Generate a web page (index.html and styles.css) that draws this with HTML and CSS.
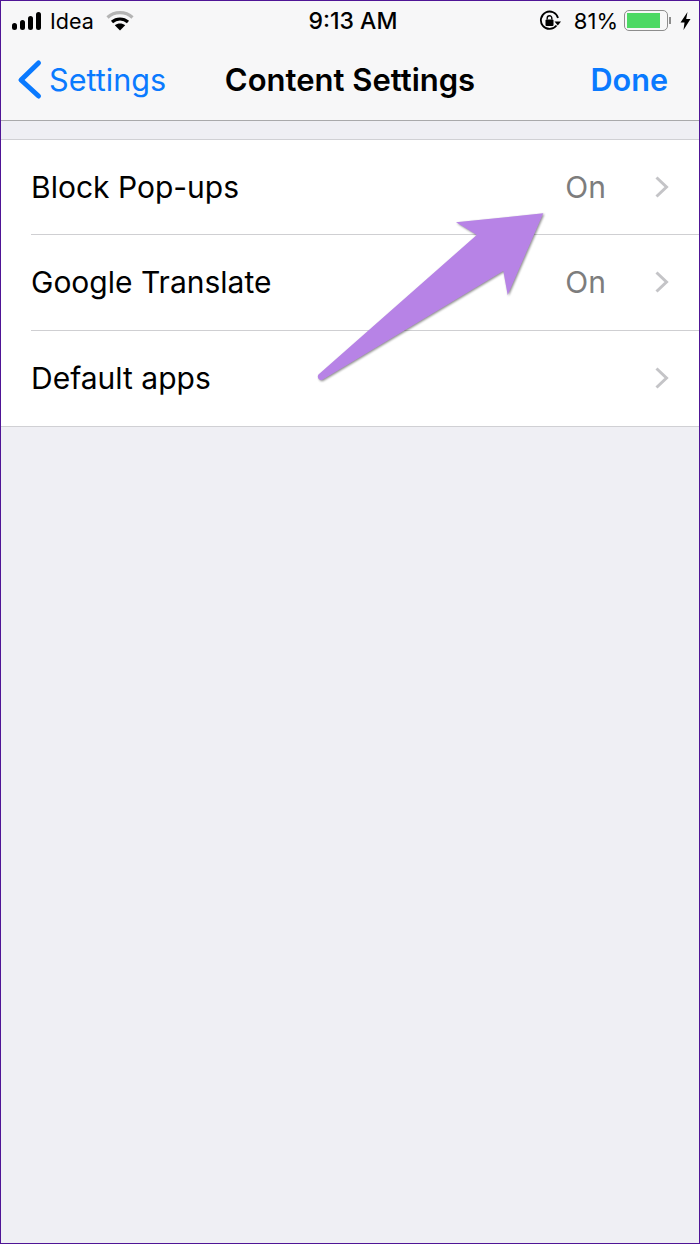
FILE: index.html
```html
<!DOCTYPE html>
<html lang="en">
<head>
    <meta charset="UTF-8">
    <meta name="viewport" content="width=device-width, initial-scale=1.0">
    <title>Content Settings</title>
    <link rel="stylesheet" href="styles.css">
</head>
<body>

<div class="phone">
    <header class="top-bar">
        <div class="status-bar">
            <div class="status-left">
                <svg class="signal" width="32" height="20" viewBox="0 0 32 20">
                    <rect x="0" y="12" width="5" height="7" rx="2.5"/>
                    <rect x="8" y="9" width="5" height="10" rx="2.5"/>
                    <rect x="16" y="5" width="5" height="14" rx="2.5"/>
                    <rect x="24" y="1" width="5" height="18" rx="2.5"/>
                </svg>
                <span class="carrier">Idea</span>
                <svg class="wifi" width="28" height="20" viewBox="0 0 28 20">
                    <path d="M1.500 6.500C8.500 0 19.500 0 26.500 6.500" fill="none" stroke="#b4b4b4" stroke-width="3.200"/>
                    <path d="M6 11C10.500 7 17.500 7 22 11" fill="none" stroke="#000" stroke-width="3.200"/>
                    <path d="M14 19.500L8.800 14.200C11.800 11.800 16.200 11.800 19.200 14.200Z"/>
                </svg>
            </div>
            <div class="status-time">9:13 AM</div>
            <div class="status-right">
                <svg class="rotation-lock" width="22" height="22" viewBox="0 0 22 22">
                    <path d="M17.500 15.500A8.700 8.700 0 1 1 19 8" fill="none" stroke="#000" stroke-width="1.800"/>
                    <path d="M15.500 11.500h6.500l-3.200 4z"/>
                    <rect x="6.500" y="9.500" width="8" height="6.500" rx="1"/>
                    <path d="M8.200 9.500V8a2.300 2.300 0 0 1 4.600 0v1.500" fill="none" stroke="#000" stroke-width="1.400"/>
                </svg>
                <span class="battery-pct">81%</span>
                <div class="battery">
                    <div class="battery-body"><div class="battery-fill"></div></div>
                    <div class="battery-cap"></div>
                </div>
                <svg class="bolt" width="11" height="20" viewBox="0 0 11 20">
                    <path d="M7.500 1L0.500 11.500H4.500L3.500 19L10.500 8H6.200Z"/>
                </svg>
            </div>
        </div>
        <nav class="nav-bar">
            <a class="nav-back">
                <svg class="back-chevron" width="26" height="42" viewBox="0 0 26 42">
                    <path d="M21.500 4L4 21L21.500 37" fill="none" stroke="#0a7aff" stroke-width="5" stroke-linecap="round" stroke-linejoin="round"/>
                </svg>
                <span>Settings</span>
            </a>
            <div class="nav-title">Content Settings</div>
            <a class="nav-done">Done</a>
        </nav>
    </header>

    <ul class="settings-list">
        <li class="row">
            <span class="row-label">Block Pop-ups</span>
            <span class="row-value">On</span>
            <svg class="row-chevron" width="16" height="24" viewBox="0 0 16 24"><path d="M2.500 2.500L12.500 12L2.500 21.500" /></svg>
        </li>
        <li class="row">
            <span class="row-label">Google Translate</span>
            <span class="row-value">On</span>
            <svg class="row-chevron" width="16" height="24" viewBox="0 0 16 24"><path d="M2.500 2.500L12.500 12L2.500 21.500" /></svg>
        </li>
        <li class="row">
            <span class="row-label">Default apps</span>
            <svg class="row-chevron" width="16" height="24" viewBox="0 0 16 24"><path d="M2.500 2.500L12.500 12L2.500 21.500" /></svg>
        </li>
    </ul>

    <!-- callout arrow on top of the list -->
    <svg class="callout" width="240" height="180" viewBox="0 0 240 180">
        <path class="callout-arrow" d="M226.300 10.300L139 19.300L159.700 32L1.500 171.500C-0.500 174 2 178.500 5.500 176.800L186.300 68L190.700 92Z" />
    </svg>
</div>

</body>
</html>
```

FILE: styles.css
```css
* {
    box-sizing: border-box;
}
html, body {
    margin: 0;
    padding: 0;
}
body {
    font-family: Inter, "Liberation Sans", sans-serif;
    background-color: #efeff4;
}
.phone {
    position: relative;
    width: 700px;
    height: 1244px;
    border: 1px solid #4f1596;
    background-color: #efeff4;
    color: #000;
    overflow: hidden;
}

/* status bar + nav */
.top-bar {
    background-color: #f7f7f8;
    border-bottom: 1px solid #a9a9ab;
    height: 120px;
}
.status-bar {
    position: relative;
    display: flex;
    justify-content: space-between;
    align-items: center;
    height: 40px;
    padding: 0 8px 1px 11px;
    font-size: 21.500px;
}
.status-left, .status-right {
    display: flex;
    align-items: center;
}
.carrier {
    margin-left: 6px;
}
.wifi {
    margin-left: 12px;
}
.status-time {
    position: absolute;
    left: 6px;
    right: 0;
    text-align: center;
    font-size: 23px;
    font-weight: 500;
    pointer-events: none;
}
.battery-pct {
    margin-left: 13px;
    font-size: 22px;
}
.battery {
    display: flex;
    align-items: center;
    margin-left: 6px;
}
.battery-body {
    width: 44px;
    height: 21px;
    border: 1.500px solid #8d8d8d;
    border-radius: 5px;
    padding: 2px;
}
.battery-fill {
    width: 33px;
    height: 100%;
    background-color: #4cd964;
}
.battery-cap {
    width: 2px;
    height: 7px;
    margin-left: 1px;
    background-color: #8d8d8d;
}
.bolt {
    margin-left: 9px;
}
.nav-bar {
    position: relative;
    display: flex;
    justify-content: space-between;
    align-items: center;
    height: 77px;
    padding: 0 31px 0 16px;
    font-size: 30.600px;
    color: #0a7aff;
}
.nav-back {
    display: flex;
    align-items: center;
    gap: 6px;
}
.nav-title {
    position: absolute;
    left: 0;
    right: 0;
    text-align: center;
    font-size: 31px;
    font-weight: 600;
    color: #000;
}
.nav-done {
    font-weight: 600;
}

/* list */
.settings-list {
    list-style: none;
    margin: 18px 0 0;
    padding: 0;
    background: #fff;
    border-top: 1px solid #d0d0d4;
    border-bottom: 1px solid #d0d0d4;
}
.row {
    display: flex;
    align-items: center;
    height: 95.330px;
    margin-left: 30px;
    padding: 0 29px 1px 0;
    font-size: 30px;
    border-bottom: 1px solid #cfcfd2;
}
.row:last-child {
    border-bottom: none;
}
.row-label {
    flex: 1;
}
.row-value {
    color: #7d7d7d;
    margin-right: 48px;
}
.row-chevron {
    fill: none;
    stroke: #c4c4c7;
    stroke-width: 3;
}

/* callout */
.callout {
    position: absolute;
    left: 316px;
    top: 202px;
    overflow: visible;
}
.callout-arrow {
    fill: #b783e6;
    filter: drop-shadow(1px 1px 0.8px rgba(0, 0, 0, 0.45));
}
```
